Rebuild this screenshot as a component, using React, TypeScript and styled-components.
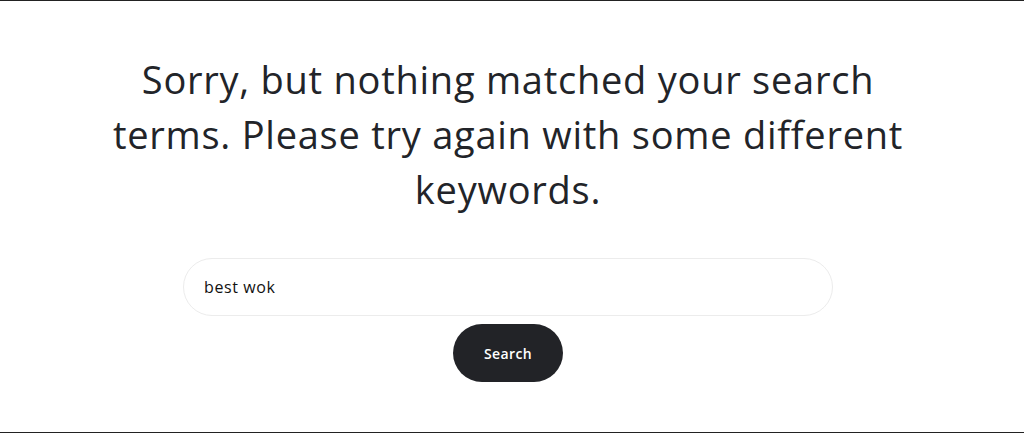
import React, { useState } from "react";
import styled, { createGlobalStyle } from "styled-components";

const GlobalStyle = createGlobalStyle`
  html, body {
    margin: 0;
    padding: 0;
    background: #ffffff;
  }
  * { box-sizing: border-box; }
`;

const Page = styled.main`
  width: 1024px;
  height: 433px;
  border-top: 1px solid #222222;
  border-bottom: 1px solid #222222;
  display: flex;
  flex-direction: column;
  align-items: center;
  padding: 51px 8px 0 0;
  font-family: "Open Sans", "Liberation Sans", sans-serif;
  color: #222429;
`;

const Message = styled.h1`
  margin: 0;
  max-width: 800px;
  text-align: center;
  font-size: 38px;
  font-weight: 400;
  line-height: 55px;
  letter-spacing: 0.75px;
  color: #222429;
`;

const SearchForm = styled.form`
  margin-top: 41px;
  display: flex;
  flex-direction: column;
  align-items: center;
  gap: 8px;
`;

const SearchInput = styled.input`
  width: 650px;
  height: 58px;
  border: 1px solid #ececec;
  border-radius: 29px;
  padding: 0 20px;
  font-family: inherit;
  font-size: 16px;
  letter-spacing: 0.6px;
  color: #111111;
  background: #ffffff;
  outline: none;
`;

const SearchButton = styled.button`
  width: 110px;
  height: 58px;
  border: none;
  border-radius: 29px;
  background: #222327;
  color: #ffffff;
  font-family: inherit;
  font-size: 14px;
  font-weight: 600;
  letter-spacing: 0.4px;
  cursor: pointer;
`;

export default function App() {
  const [query, setQuery] = useState("best wok");
  return (
    <>
      <GlobalStyle />
      <Page>
        <Message>
          Sorry, but nothing matched your search terms. Please try again with
          some different keywords.
        </Message>
        <SearchForm onSubmit={(e) => e.preventDefault()}>
          <SearchInput
            type="search"
            value={query}
            onChange={(e) => setQuery(e.target.value)}
          />
          <SearchButton type="submit">Search</SearchButton>
        </SearchForm>
      </Page>
    </>
  );
}
